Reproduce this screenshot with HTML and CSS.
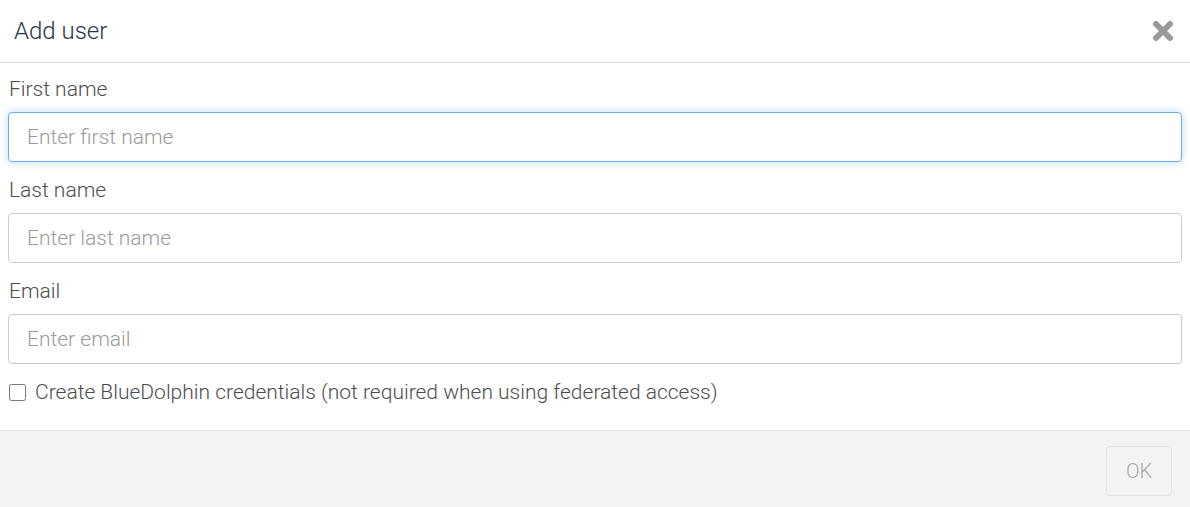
FILE: index.html
```html
<!DOCTYPE html>
<html lang="en">
<head>
    <meta charset="UTF-8">
    <title>Add user</title>
    <link rel="stylesheet" href="styles.css">
</head>
<body>
    <div class="modal">
        <header class="modal-header">
            <h1 class="modal-title">Add user</h1>
            <button class="close-btn" aria-label="Close">
                <svg width="22" height="22" viewBox="0 0 22 22">
                    <path d="M4 4 L18 18 M18 4 L4 18" stroke="#9a9a9a" stroke-width="6" stroke-linecap="round"/>
                </svg>
            </button>
        </header>

        <form class="modal-body">
            <label for="firstName" class="field-label">First name</label>
            <input type="text" id="firstName" class="field-input focused" placeholder="Enter first name">

            <label for="lastName" class="field-label">Last name</label>
            <input type="text" id="lastName" class="field-input" placeholder="Enter last name">

            <label for="email" class="field-label">Email</label>
            <input type="email" id="email" class="field-input" placeholder="Enter email">

            <div class="check-row">
                <input type="checkbox" id="createCreds" class="check-box">
                <label for="createCreds">Create BlueDolphin credentials (not required when using federated access)</label>
            </div>
        </form>

        <footer class="modal-footer">
            <button class="ok-btn" disabled>OK</button>
        </footer>
    </div>
</body>
</html>
```

FILE: styles.css
```css
body {
    margin: 0;
    font-family: Roboto, "Noto Sans", sans-serif;
    font-weight: 300;
    background-color: #fff;
    color: #4a4a4a;
}

.modal {
    width: 1190px;
    height: 507px;
    display: flex;
    flex-direction: column;
}

.modal-header {
    height: 63px;
    flex-shrink: 0;
    border-bottom: 1px solid #d9d9d9;
    display: flex;
    align-items: center;
    justify-content: space-between;
    padding: 0 16px 0 14px;
    box-sizing: border-box;
}

.modal-title {
    margin: 0;
    font-size: 24px;
    font-weight: 300;
    color: #283645;
}

.close-btn {
    background: none;
    border: none;
    padding: 0;
    width: 22px;
    height: 22px;
    cursor: pointer;
}

.modal-body {
    padding: 14px 8px 0 8px;
    height: 367px;
    flex-shrink: 0;
    box-sizing: border-box;
    display: flex;
    flex-direction: column;
}

.field-label {
    font-size: 21px;
    color: #4d4d4d;
    padding-left: 1px;
    margin-bottom: 11px;
    line-height: 24px;
}

.field-input {
    height: 50px;
    flex-shrink: 0;
    box-sizing: border-box;
    border: 1px solid #cccccc;
    border-radius: 4px;
    padding: 0 18px;
    font-family: inherit;
    font-size: 21px;
    font-weight: 300;
    color: #333;
    margin: 0 0 16px 0;
    outline: none;
}

.field-input::placeholder {
    color: #9a9a9a;
}

.field-input.focused {
    border-color: #66afe9;
    box-shadow: 0 0 8px rgba(102, 175, 233, 0.45);
}

.check-row {
    display: flex;
    align-items: center;
    font-size: 21px;
    line-height: 24px;
    color: #4d4d4d;
}

.check-box {
    width: 17px;
    height: 17px;
    margin: 0 9px 0 1px;
}

.modal-footer {
    flex: 1;
    background-color: #f3f3f3;
    border-top: 1px solid #e2e2e2;
    display: flex;
    justify-content: flex-end;
    align-items: flex-start;
    padding: 15px 18px 0 0;
}

.ok-btn {
    width: 66px;
    height: 50px;
    background-color: #f3f3f3;
    border: 1px solid #e3e3e3;
    border-radius: 4px;
    font-family: inherit;
    font-size: 20px;
    font-weight: 300;
    color: #a8a8a8;
}
```
